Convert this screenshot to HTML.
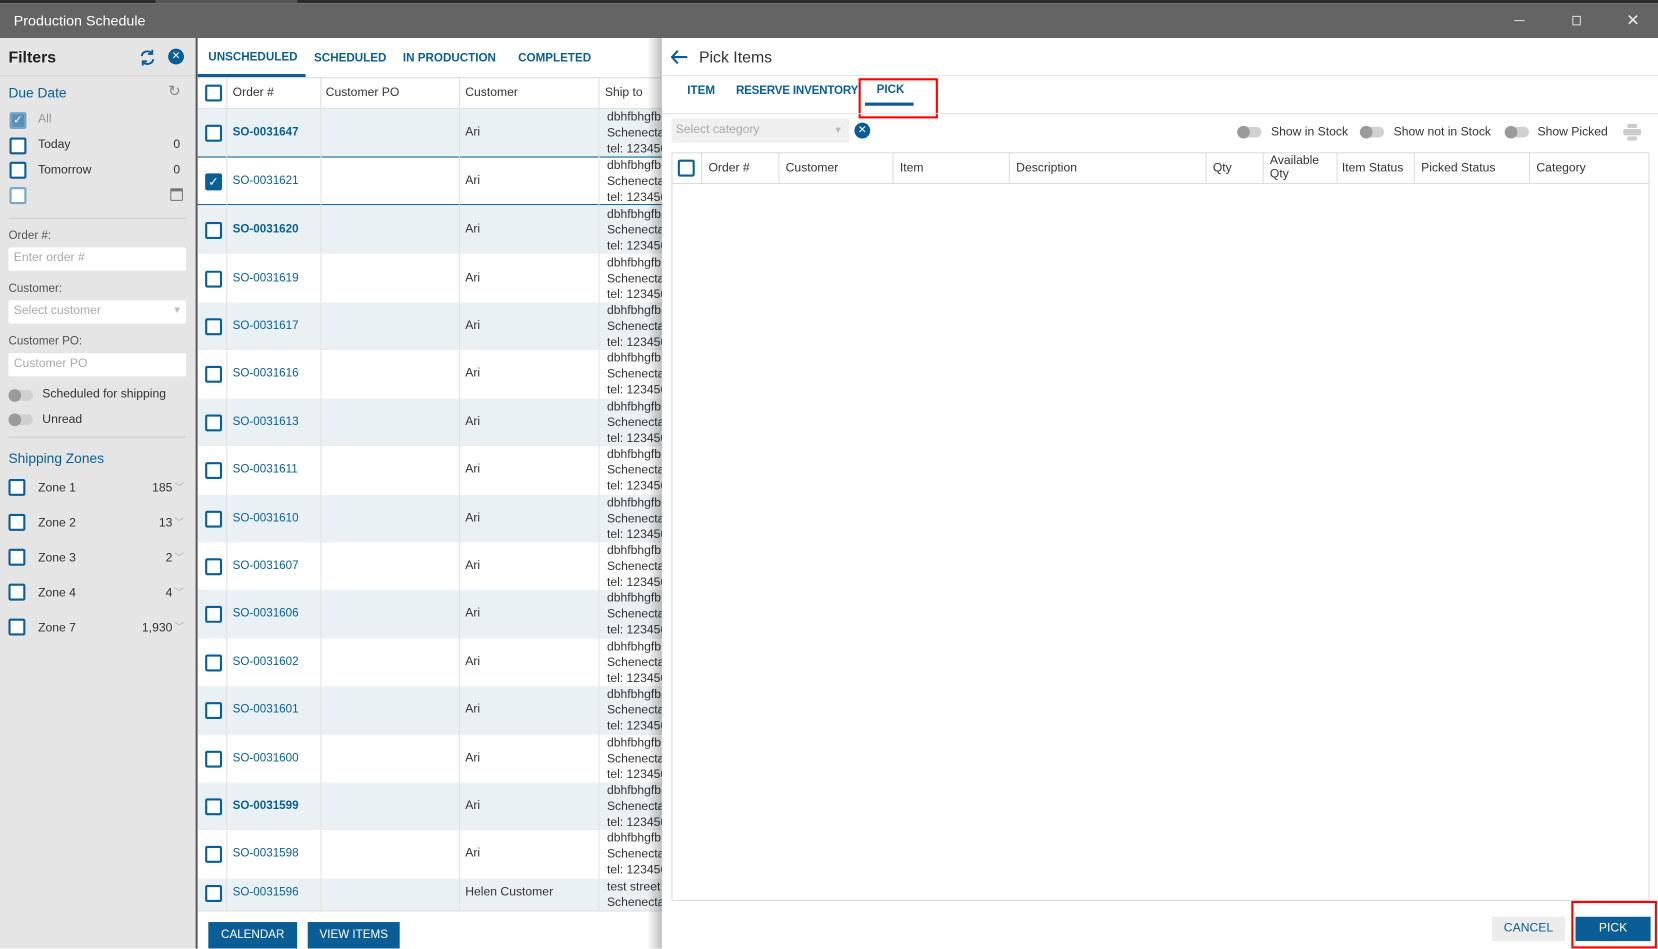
<!DOCTYPE html>
<html><head><meta charset="utf-8"><style>
*{box-sizing:border-box;margin:0;padding:0}
html,body{width:1658px;height:949px;overflow:hidden;background:#fff}
body{font-family:"Liberation Sans",sans-serif;font-size:11.5px;color:#333}
#w{position:absolute;left:0;top:0;width:1568px;height:897px;transform:scale(1.05740);transform-origin:0 0;overflow:hidden}
.a{position:absolute}
.cb{position:absolute;width:16px;height:16px;border:2px solid #0a5e95;border-radius:2px;background:#fff}
.blue{color:#0a5e95}
.row{position:absolute;left:187px;width:439px;height:45.4px}
.row.alt{background:#eaf1f5}
.row .cb{left:7px;top:15px}
.row .o{position:absolute;left:33px;top:16px;color:#0a5e95;font-size:11px}
.row .o.b{font-weight:bold}
.row .c{position:absolute;left:253px;top:16px;color:#333}
.row .s{position:absolute;left:387px;top:1px;line-height:15px;color:#333;white-space:nowrap;width:52px;overflow:hidden}
.tg{position:absolute;width:22px;height:10px;border-radius:5px;background:#d0d0d0}
.tg:before{content:"";position:absolute;left:-1px;top:-1px;width:12px;height:12px;border-radius:6px;background:#9a9a9a}
.inp{position:absolute;left:8px;width:168px;height:22px;background:#fff;border-radius:2px;color:#aaa;padding:4px 5px;font-size:11.5px}
.zn{position:absolute;left:0;width:187px;height:20px}
.zn .cb{left:8px;top:0}
.zn .t{position:absolute;left:36px;top:3px}
.zn .n{position:absolute;right:24px;top:3px}
.zn .v{position:absolute;right:13px;top:1px;color:#aaa;font-size:9px}
.th{position:absolute;top:0;height:30px;border-right:1px solid #ddd;padding-left:6px;line-height:30px;color:#333}
.tab{position:absolute;font-weight:bold;font-size:11px;color:#0a5e95}
</style></head><body><div id="w">
<div class="a" style="left:0;top:0;width:1568px;height:3px;background:#2b2b2b"></div>
<div class="a" style="left:147px;top:0;width:134px;height:3px;background:#555"></div>
<div class="a" style="left:0;top:3px;width:1568px;height:33px;background:#646464"></div>
<div class="a" style="left:13px;top:12px;color:#fff;font-size:13.5px">Production Schedule</div>
<div class="a" style="left:1432px;top:19px;width:10px;height:1px;background:#ddd"></div>
<div class="a" style="left:1487px;top:15px;width:8px;height:9px;border:1px solid #ddd"></div>
<div class="a" style="left:1538px;top:10px;color:#eee;font-size:15px">✕</div>

<div class="a" style="left:0;top:36px;width:187px;height:861px;background:#e5e5e5;border-right:2px solid #555"></div>
<div class="a" style="left:8px;top:46px;font-size:15px;font-weight:bold;color:#222">Filters</div>
<svg class="a" style="left:131px;top:46px" width="17" height="17" viewBox="0 0 17 17"><path d="M3 7a5.5 5.5 0 0 1 10-2M14 10a5.5 5.5 0 0 1-10 2" fill="none" stroke="#0a5e95" stroke-width="1.8"/><path d="M13 1v4h-4M4 16v-4h4" fill="none" stroke="#0a5e95" stroke-width="1.8"/></svg>
<div class="a" style="left:159px;top:46px;width:15px;height:15px;border-radius:50%;background:#0a5e95;color:#fff;font-size:10px;text-align:center;line-height:15px">✕</div>
<div class="a" style="left:0;top:71px;width:185px;height:1px;background:#d5d5d5"></div>
<div class="a blue" style="left:8px;top:80px;font-size:13px">Due Date</div>
<div class="a" style="left:159px;top:78px;color:#888;font-size:14px">↻</div>
<div class="cb" style="left:9px;top:106px;background:#5a91b9;border-color:#7aa6c6;color:#fff;font-size:11px;line-height:12px;text-align:center">✓</div>
<div class="a" style="left:36px;top:107px;color:#999">All</div>
<div class="cb" style="left:9px;top:130px"></div><div class="a" style="left:36px;top:131px">Today</div><div class="a" style="left:164px;top:131px">0</div>
<div class="cb" style="left:9px;top:153px"></div><div class="a" style="left:36px;top:155px">Tomorrow</div><div class="a" style="left:164px;top:155px">0</div>
<div class="cb" style="left:9px;top:177px;border-color:#7aa6c6"></div>
<div class="a" style="left:161px;top:178px;width:12px;height:12px;border:1.5px solid #777;border-top-width:3px;border-radius:1px"></div>
<div class="a" style="left:8px;top:206px;width:168px;height:1px;background:#d0d0d0"></div>
<div class="a" style="left:8px;top:217px;color:#555;font-size:11px">Order #:</div>
<div class="inp" style="top:234px">Enter order #</div>
<div class="a" style="left:8px;top:267px;color:#555;font-size:11px">Customer:</div>
<div class="inp" style="top:284px;left:8px">Select customer<span style="position:absolute;right:4px;top:4px;color:#bbb;font-size:9px">▼</span></div>
<div class="a" style="left:8px;top:317px;color:#555;font-size:11px">Customer PO:</div>
<div class="inp" style="top:334px">Customer PO</div>
<div class="tg" style="left:9px;top:369px"></div><div class="a" style="left:40px;top:367px">Scheduled for shipping</div>
<div class="tg" style="left:9px;top:392px"></div><div class="a" style="left:40px;top:391px">Unread</div>
<div class="a" style="left:8px;top:413px;width:168px;height:1px;background:#d0d0d0"></div>
<div class="a blue" style="left:8px;top:426px;font-size:13px">Shipping Zones</div>
<div class="zn" style="top:453px"><div class="cb"></div><span class="t">Zone 1</span><span class="n">185</span><span class="v">﹀</span></div>
<div class="zn" style="top:486px"><div class="cb"></div><span class="t">Zone 2</span><span class="n">13</span><span class="v">﹀</span></div>
<div class="zn" style="top:519px"><div class="cb"></div><span class="t">Zone 3</span><span class="n">2</span><span class="v">﹀</span></div>
<div class="zn" style="top:552px"><div class="cb"></div><span class="t">Zone 4</span><span class="n">4</span><span class="v">﹀</span></div>
<div class="zn" style="top:585px"><div class="cb"></div><span class="t">Zone 7</span><span class="n">1,930</span><span class="v">﹀</span></div>

<div class="a" style="left:187px;top:36px;width:439px;height:861px;background:#fff"></div>
<div class="tab" style="left:197px;top:48px">UNSCHEDULED</div>
<div class="tab" style="left:297px;top:49px">SCHEDULED</div>
<div class="tab" style="left:381px;top:49px">IN PRODUCTION</div>
<div class="tab" style="left:490px;top:49px">COMPLETED</div>
<div class="a" style="left:187px;top:70px;width:102px;height:3px;background:#0a5e95"></div>
<div class="a" style="left:187px;top:73px;width:439px;height:1px;background:#ddd"></div>
<div class="a" style="left:187px;top:74px;width:439px;height:29px;border-bottom:1px solid #ddd">
 <div class="cb" style="left:7px;top:6px"></div>
 <div class="a" style="left:27px;top:0;width:1px;height:29px;background:#ddd"></div>
 <div class="a" style="left:33px;top:8px">Order #</div>
 <div class="a" style="left:116px;top:0;width:1px;height:29px;background:#ddd"></div>
 <div class="a" style="left:121px;top:8px">Customer PO</div>
 <div class="a" style="left:247px;top:0;width:1px;height:29px;background:#ddd"></div>
 <div class="a" style="left:253px;top:8px">Customer</div>
 <div class="a" style="left:379px;top:0;width:1px;height:29px;background:#ddd"></div>
 <div class="a" style="left:385px;top:8px">Ship to</div>
</div>
<div class="row alt" style="top:103px"><div class="cb"></div><span class="o b">SO-0031647</span><span class="c">Ari</span><span class="s">dbhfbhgfb<br>Schenecta<br>tel: 123456</span></div>
<div class="row" style="top:148.4px;border-top:1.5px solid #0a5e95;border-bottom:1.5px solid #0a5e95"><div class="cb" style="background:#0a5e95;color:#fff;text-align:center;line-height:12px;font-size:12px">✓</div><span class="o">SO-0031621</span><span class="c">Ari</span><span class="s">dbhfbhgfb<br>Schenecta<br>tel: 123456</span></div>
<div class="row alt" style="top:195px"><div class="cb"></div><span class="o b">SO-0031620</span><span class="c">Ari</span><span class="s">dbhfbhgfb<br>Schenecta<br>tel: 123456</span></div>
<div class="row" style="top:240.6px"><div class="cb"></div><span class="o">SO-0031619</span><span class="c">Ari</span><span class="s">dbhfbhgfb<br>Schenecta<br>tel: 123456</span></div>
<div class="row alt" style="top:286px"><div class="cb"></div><span class="o">SO-0031617</span><span class="c">Ari</span><span class="s">dbhfbhgfb<br>Schenecta<br>tel: 123456</span></div>
<div class="row" style="top:331.4px"><div class="cb"></div><span class="o">SO-0031616</span><span class="c">Ari</span><span class="s">dbhfbhgfb<br>Schenecta<br>tel: 123456</span></div>
<div class="row alt" style="top:376.8px"><div class="cb"></div><span class="o">SO-0031613</span><span class="c">Ari</span><span class="s">dbhfbhgfb<br>Schenecta<br>tel: 123456</span></div>
<div class="row" style="top:422.2px"><div class="cb"></div><span class="o">SO-0031611</span><span class="c">Ari</span><span class="s">dbhfbhgfb<br>Schenecta<br>tel: 123456</span></div>
<div class="row alt" style="top:467.6px"><div class="cb"></div><span class="o">SO-0031610</span><span class="c">Ari</span><span class="s">dbhfbhgfb<br>Schenecta<br>tel: 123456</span></div>
<div class="row" style="top:513px"><div class="cb"></div><span class="o">SO-0031607</span><span class="c">Ari</span><span class="s">dbhfbhgfb<br>Schenecta<br>tel: 123456</span></div>
<div class="row alt" style="top:558.4px"><div class="cb"></div><span class="o">SO-0031606</span><span class="c">Ari</span><span class="s">dbhfbhgfb<br>Schenecta<br>tel: 123456</span></div>
<div class="row" style="top:603.8px"><div class="cb"></div><span class="o">SO-0031602</span><span class="c">Ari</span><span class="s">dbhfbhgfb<br>Schenecta<br>tel: 123456</span></div>
<div class="row alt" style="top:649.2px"><div class="cb"></div><span class="o">SO-0031601</span><span class="c">Ari</span><span class="s">dbhfbhgfb<br>Schenecta<br>tel: 123456</span></div>
<div class="row" style="top:694.6px"><div class="cb"></div><span class="o">SO-0031600</span><span class="c">Ari</span><span class="s">dbhfbhgfb<br>Schenecta<br>tel: 123456</span></div>
<div class="row alt" style="top:740px"><div class="cb"></div><span class="o b">SO-0031599</span><span class="c">Ari</span><span class="s">dbhfbhgfb<br>Schenecta<br>tel: 123456</span></div>
<div class="row" style="top:785.4px"><div class="cb"></div><span class="o">SO-0031598</span><span class="c">Ari</span><span class="s">dbhfbhgfb<br>Schenecta<br>tel: 123456</span></div>
<div class="row alt" style="top:830.8px;height:30px"><div class="cb" style="top:6px"></div><span class="o" style="top:7px">SO-0031596</span><span class="c" style="top:7px">Helen Customer</span><span class="s">test street<br>Schenecta</span></div>
<div class="a" style="left:214px;top:103px;width:1px;height:758px;background:#e3e3e3"></div>
<div class="a" style="left:303px;top:103px;width:1px;height:758px;background:#e3e3e3"></div>
<div class="a" style="left:434px;top:103px;width:1px;height:758px;background:#e3e3e3"></div>
<div class="a" style="left:566px;top:103px;width:1px;height:758px;background:#e3e3e3"></div>
<div class="a" style="left:187px;top:861px;width:439px;height:1px;background:#ddd"></div>
<div class="a" style="left:197px;top:872px;width:84px;height:25px;background:#0a5e95;color:#fff;text-align:center;line-height:25px;font-size:11px">CALENDAR</div>
<div class="a" style="left:291px;top:872px;width:87px;height:25px;background:#0a5e95;color:#fff;text-align:center;line-height:25px;font-size:11px">VIEW ITEMS</div>

<div class="a" style="left:612px;top:36px;width:14px;height:861px;background:linear-gradient(to right,rgba(0,0,0,0),rgba(0,0,0,.25))"></div>
<div class="a" style="left:626px;top:36px;width:942px;height:861px;background:#fff"></div>
<svg class="a" style="left:634px;top:47px" width="17" height="14" viewBox="0 0 17 14"><path d="M16 7H2M7 1L1.5 7L7 13" fill="none" stroke="#0a5e95" stroke-width="2"/></svg>
<div class="a" style="left:661px;top:46px;font-size:15px;color:#333">Pick Items</div>
<div class="a" style="left:626px;top:71px;width:942px;height:1px;background:#e3e3e3"></div>
<div class="tab" style="left:650px;top:80px">ITEM</div>
<div class="tab" style="left:696px;top:80px;letter-spacing:-0.2px">RESERVE INVENTORY</div>
<div class="tab" style="left:829px;top:79px">PICK</div>
<div class="a" style="left:818px;top:97px;width:46px;height:3px;background:#0a5e95"></div>
<div class="a" style="left:812px;top:74px;width:75px;height:38px;border:2px solid #f00"></div>
<div class="a" style="left:626px;top:107px;width:942px;height:1px;background:#e3e3e3"></div>
<div class="a" style="left:635px;top:112px;width:168px;height:23px;background:#f0f0f0;border-radius:2px;color:#aaa;padding:5px 4px">Select category<span style="position:absolute;right:6px;top:6px;color:#bbb;font-size:9px">▼</span></div>
<div class="a" style="left:808px;top:116px;width:15px;height:15px;border-radius:50%;background:#0a5e95;color:#fff;font-size:10px;text-align:center;line-height:15px">✕</div>
<div class="tg" style="left:1171px;top:120px"></div><div class="a" style="left:1202px;top:119px">Show in Stock</div>
<div class="tg" style="left:1287px;top:120px"></div><div class="a" style="left:1318px;top:119px">Show not in Stock</div>
<div class="tg" style="left:1424px;top:120px"></div><div class="a" style="left:1454px;top:119px">Show Picked</div>
<svg class="a" style="left:1535px;top:117px" width="17" height="16" viewBox="0 0 17 16"><rect x="4" y="0" width="9" height="4" fill="#ccc"/><rect x="0" y="5" width="17" height="6" rx="1.5" fill="#ccc"/><rect x="4" y="12" width="9" height="4" fill="#ccc"/></svg>
<div class="a" style="left:635px;top:144px;width:925px;height:708px;border:1px solid #ddd"></div>
<div class="a" style="left:635px;top:144px;width:925px;height:30px;border-bottom:1px solid #ddd">
 <div class="cb" style="left:6px;top:7px"></div>
 <div class="th" style="left:0;width:29px"></div>
 <div class="th" style="left:29px;width:73px">Order #</div>
 <div class="th" style="left:102px;width:108px">Customer</div>
 <div class="th" style="left:210px;width:110px">Item</div>
 <div class="th" style="left:320px;width:186px">Description</div>
 <div class="th" style="left:506px;width:54px">Qty</div>
 <div class="th" style="left:560px;width:70px;line-height:13px;padding-top:2px">Available<br>Qty</div>
 <div class="th" style="left:630px;width:73px;padding-left:4px">Item Status</div>
 <div class="th" style="left:703px;width:109px">Picked Status</div>
 <div class="th" style="left:812px;width:113px;border-right:none">Category</div>
</div>
<div class="a" style="left:1411px;top:867px;width:69px;height:23px;background:#ececec;color:#0a5e95;text-align:center;line-height:23px">CANCEL</div>
<div class="a" style="left:1490px;top:867px;width:71px;height:23px;background:#0a5e95;color:#fff;text-align:center;line-height:23px">PICK</div>
<div class="a" style="left:1486px;top:852px;width:81px;height:45px;border:2px solid #f00"></div>
</div></body></html>
